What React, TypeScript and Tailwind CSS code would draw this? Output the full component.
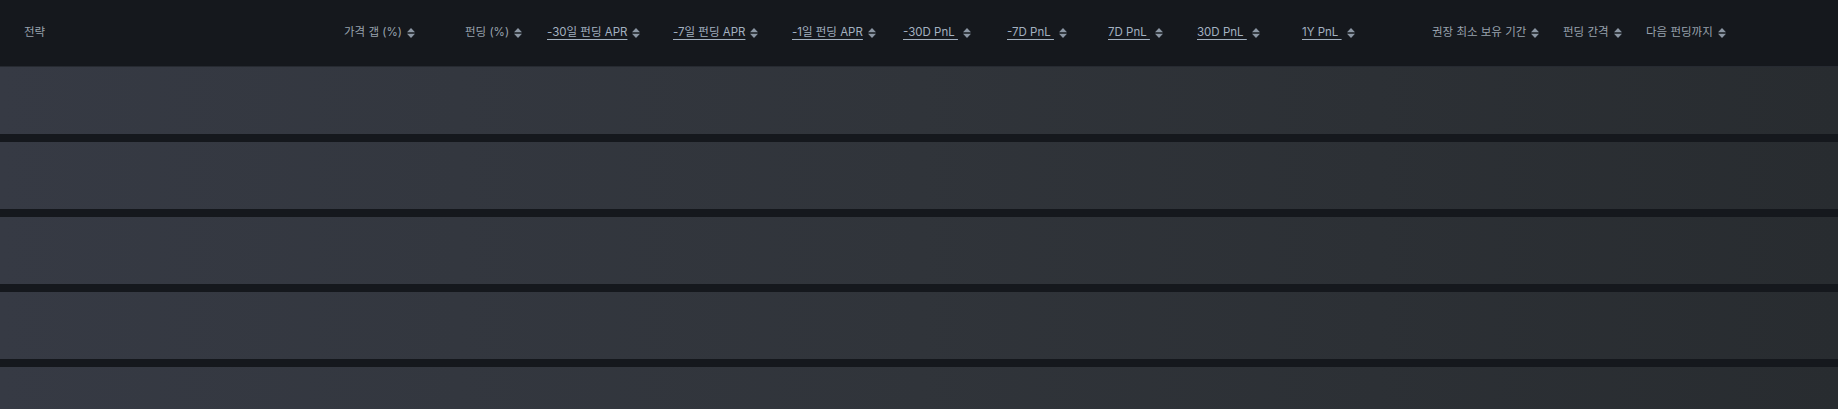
import React from "react";

type Col = { label: string; width: number; link?: boolean; sort?: boolean };

const columns: Col[] = [
  { label: "전략", width: 320 },
  { label: "가격 갭 (%)", width: 121, sort: true },
  { label: "펀딩 (%)", width: 82, sort: true },
  { label: "-30일 펀딩 APR", width: 126, link: true, sort: true },
  { label: "-7일 펀딩 APR", width: 119, link: true, sort: true },
  { label: "-1일 펀딩 APR", width: 111, link: true, sort: true },
  { label: "-30D PnL\u00a0", width: 104, link: true, sort: true },
  { label: "-7D PnL\u00a0", width: 101, link: true, sort: true },
  { label: "7D PnL\u00a0", width: 89, link: true, sort: true },
  { label: "30D PnL\u00a0", width: 105, link: true, sort: true },
  { label: "1Y PnL\u00a0", width: 130, link: true, sort: true },
  { label: "권장 최소 보유 기간", width: 131, sort: true },
  { label: "펀딩 간격", width: 83, sort: true },
  { label: "다음 펀딩까지", width: 160, sort: true },
];

function SortIcon() {
  return (
    <svg width="8" height="10" viewBox="0 0 8 10" className="ml-[5px] shrink-0">
      <path d="M4 0 L8 4.2 H0 Z" fill="#8b96a3" />
      <path d="M4 10 L8 5.8 H0 Z" fill="#8b96a3" />
    </svg>
  );
}

export default function App() {
  return (
    <div
      className="w-full h-[409px] overflow-hidden bg-[#15181d]"
      style={{ fontFamily: "Inter, 'Noto Sans CJK KR', sans-serif" }}
    >
      {/* header */}
      <div className="h-[66px] flex items-center pl-[24px] border-b border-[#262a31] box-content">
        {columns.map((c) => (
          <div
            key={c.label}
            className="flex items-center shrink-0 text-[11.5px] whitespace-pre"
            style={{ width: c.width }}
          >
            <span
              className={
                c.link
                  ? "text-[#a3b1c0] underline underline-offset-[3px] decoration-[#a3b1c0]"
                  : "text-[#98a2ad]"
              }
            >
              {c.label}
            </span>
            {c.sort && <SortIcon />}
          </div>
        ))}
      </div>

      {/* skeleton rows */}
      <div className="flex flex-col gap-[8px]">
        {[0, 1, 2, 3, 4].map((i) => (
          <div
            key={i}
            className="h-[67px] w-full bg-gradient-to-r from-[#363a44] via-[#30343a] to-[#282c30]"
          />
        ))}
      </div>
    </div>
  );
}
